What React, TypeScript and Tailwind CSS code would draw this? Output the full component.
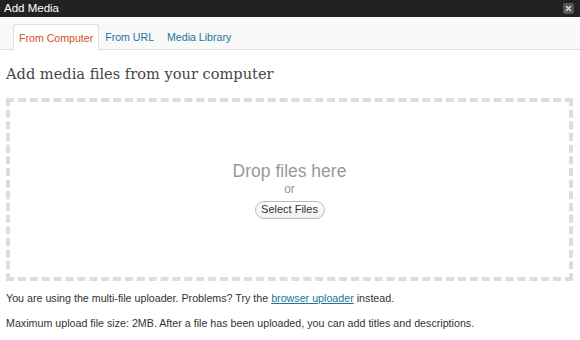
import React from "react";

export default function App() {
  const sans = { fontFamily: '"Liberation Sans", Arial, sans-serif' };
  return (
    <div className="w-[580px] h-[340px] bg-white overflow-hidden" style={sans}>
      <div className="h-[17px] bg-[#222222] flex items-center justify-between pl-[4px] pr-[6px]">
        <span className="text-white text-[11.5px] leading-none">Add Media</span>
        <div className="w-[11px] h-[11px] bg-[#555555] rounded-[2px] flex items-center justify-center">
          <svg width="7" height="7" viewBox="0 0 7 7">
            <path d="M1 1L6 6M6 1L1 6" stroke="#dddddd" strokeWidth="1.4" />
          </svg>
        </div>
      </div>
      <div className="h-[33px] bg-[#f9f9f9] border-b border-[#dfdfdf] flex items-end pl-[13px] text-[10.6px] leading-[14px]">
        <div className="h-[26px] bg-white border border-b-0 border-[#dfdfdf] rounded-t-[3px] px-[5px] -mb-px flex items-center text-[#d54e21]">
          <span>From Computer</span>
        </div>
        <div className="h-[26px] pt-[2px] px-[6px] flex items-center text-[#21759b]">
          <span>From URL</span>
        </div>
        <div className="h-[26px] pt-[2px] px-[7px] flex items-center text-[#21759b]">
          <span>Media Library</span>
        </div>
      </div>
      <div className="px-[6px]">
        <h2
          className="text-[14.6px] text-[#464646] mt-[14px] leading-[20px]"
          style={{ fontFamily: '"DejaVu Serif", Georgia, serif' }}
        >
          Add media files from your computer
        </h2>
        <div className="mt-[14px] h-[183px] w-[567px] border-4 border-dashed border-[#dddddd] flex flex-col items-center justify-center">
          <div className="text-[17.5px] text-[#999999] leading-[20px]">Drop files here</div>
          <div className="text-[12px] text-[#999999] leading-[14px] mt-[1px]">or</div>
          <button className="mt-[5px] h-[18px] w-[70px] rounded-full border border-[#bbbbbb] bg-gradient-to-b from-white to-[#efefef] text-[11px] text-[#333333] leading-none">
            Select Files
          </button>
        </div>
        <p className="text-[10.7px] text-[#333333] mt-[10px] leading-[14px]">
          You are using the multi-file uploader. Problems? Try the{" "}
          <a className="text-[#21759b] underline">browser uploader</a> instead.
        </p>
        <p className="text-[10.7px] text-[#333333] mt-[11px] leading-[14px]">
          Maximum upload file size: 2MB. After a file has been uploaded, you can add titles and descriptions.
        </p>
      </div>
    </div>
  );
}
